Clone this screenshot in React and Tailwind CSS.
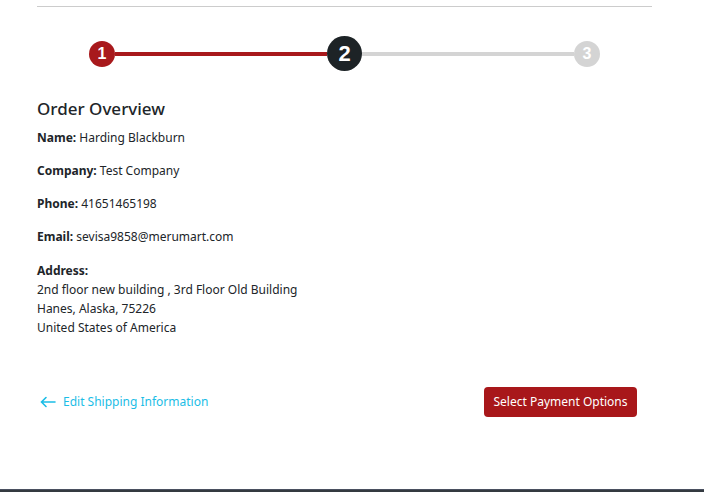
import React from "react";

export default function App() {
  const font = { fontFamily: '"Noto Sans", "Open Sans", sans-serif' };
  return (
    <div className="relative w-[704px] h-[492px] bg-white overflow-hidden text-[#212529]" style={font}>
      <div className="ml-[37px] w-[615px] pt-[6px]">
        <div className="h-px bg-[#cccccc]" />
        {/* stepper */}
        <div className="mt-[29px] flex items-center px-[52px]" style={{ fontFamily: '"Liberation Sans", Arial, sans-serif' }}>
          <div className="w-[26px] h-[26px] rounded-full bg-[#a8191c] text-white font-bold text-[16px] flex items-center justify-center">1</div>
          <div className="flex-1 h-[4px] bg-[#a8191c]" />
          <div className="w-[35px] h-[35px] rounded-full bg-[#1d2326] text-white font-bold text-[22px] flex items-center justify-center">2</div>
          <div className="flex-1 h-[4px] bg-[#d4d4d4]" />
          <div className="w-[26px] h-[26px] rounded-full bg-[#d4d4d4] text-white font-bold text-[16px] flex items-center justify-center">3</div>
        </div>

        <h2 className="mt-[26px] text-[17px] font-medium leading-[24px]">Order Overview</h2>
        <div className="mt-[7px] text-[12px] leading-[19px]">
          <p className="mb-[14px]"><span className="font-bold">Name:</span> Harding Blackburn</p>
          <p className="mb-[14px]"><span className="font-bold">Company:</span> Test Company</p>
          <p className="mb-[14px]"><span className="font-bold">Phone:</span> 41651465198</p>
          <p className="mb-[15px]"><span className="font-bold">Email:</span> sevisa9858@merumart.com</p>
          <p className="font-bold">Address:</p>
          <p>2nd floor new building , 3rd Floor Old Building</p>
          <p>Hanes, Alaska, 75226</p>
          <p>United States of America</p>
        </div>

        <div className="mt-[50px] flex items-center justify-between pr-[15px]">
          <a className="flex items-center gap-[7px] text-[#1bbde6] text-[12px] ml-[3px]">
            <svg width="16" height="12" viewBox="0 0 16 12" fill="none" stroke="#1bbde6" strokeWidth="1.6" strokeLinecap="round">
              <path d="M15 6H1.5M6 1.5L1.5 6L6 10.5" />
            </svg>
            <span>Edit Shipping Information</span>
          </a>
          <button className="h-[30px] w-[153px] rounded-[4px] bg-[#a8171a] text-white text-[12px]">Select Payment Options</button>
        </div>
      </div>
      <div className="absolute left-0 right-0 bottom-0 h-[3px] bg-[#343a40] border-t border-[#4a5060]" />
    </div>
  );
}
